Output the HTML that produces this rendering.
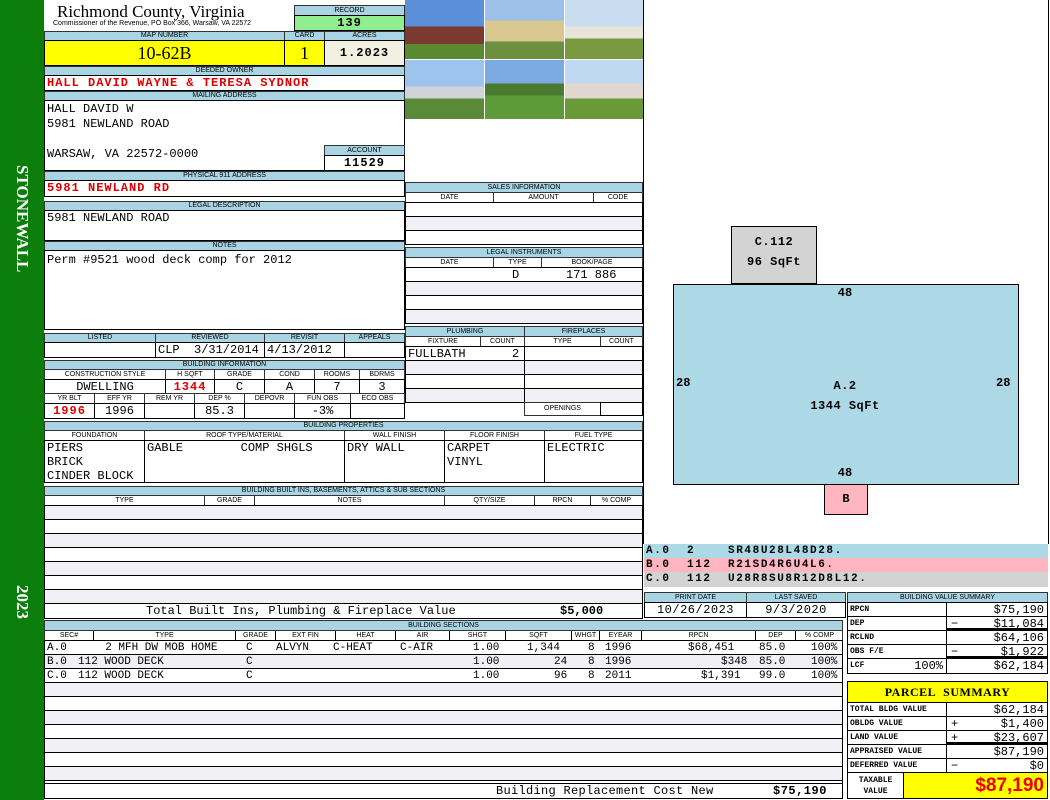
<!DOCTYPE html>
<html><head><meta charset="utf-8"><style>
body{margin:0;width:1050px;height:800px;position:relative;background:#fff;overflow:hidden;font-family:"Liberation Mono",monospace}
.a{position:absolute;box-sizing:border-box;overflow:hidden;white-space:nowrap}
.h{background:#a9d4e4;border:1px solid #333;font:7px/8px "Liberation Sans",sans-serif;text-align:center;color:#000}
.c{border:1px solid #000;background:#fff;font:12px/14px "Liberation Mono",monospace;padding-left:2px}
.r{color:#d00;font-weight:bold;letter-spacing:1px}
.ctr{text-align:center;padding:0}
.rt{text-align:right;padding-right:3px}
.lb{border-left:1px solid #000}
.s{position:absolute;font:11px/14px "Liberation Mono",monospace;white-space:pre}
.sm{font:bold 8px/14px "Liberation Mono",monospace}
</style></head><body>
<div class="a" style="left:0;top:0;width:44px;height:800px;background:#0a7d0a"></div>
<div class="a" style="left:7px;top:165px;width:30px;height:150px;color:#fff;font:bold 17px/30px 'Liberation Serif',serif;writing-mode:vertical-rl">STONEWALL</div>
<div class="a" style="left:7px;top:585px;width:30px;height:40px;color:#fff;font:bold 17px/30px 'Liberation Serif',serif;writing-mode:vertical-rl">2023</div>

<div class="a" style="left:57px;top:2px;width:230px;height:20px;font:17px/20px 'Liberation Serif',serif">Richmond County, Virginia</div>
<div class="a" style="left:53px;top:19px;width:240px;height:10px;font:7px/10px 'Liberation Sans',sans-serif">Commissioner of the Revenue, PO Box 366, Warsaw, VA 22572</div>
<div class="a h" style="left:294px;top:5px;width:111px;height:11px;line-height:9px">RECORD</div>
<div class="a c ctr" style="left:294px;top:15px;width:111px;height:16px;background:#90ee90;font-weight:bold;letter-spacing:1px">139</div>

<div class="a h" style="left:44px;top:31px;width:241px;height:10px">MAP NUMBER</div>
<div class="a h" style="left:284px;top:31px;width:41px;height:10px">CARD</div>
<div class="a h" style="left:324px;top:31px;width:81px;height:10px">ACRES</div>
<div class="a c ctr" style="left:44px;top:40px;width:241px;height:26px;background:#ffff00;font:18px/24px 'Liberation Serif',serif">10-62B</div>
<div class="a c ctr" style="left:284px;top:40px;width:41px;height:26px;background:#ffff00;font:18px/24px 'Liberation Serif',serif">1</div>
<div class="a c ctr" style="left:324px;top:40px;width:81px;height:26px;background:#f2f0e0;font-weight:bold;line-height:24px;letter-spacing:1px">1.2023</div>

<div class="a h" style="left:44px;top:66px;width:361px;height:10px">DEEDED OWNER</div>
<div class="a c r" style="left:44px;top:75px;width:361px;height:16px">HALL DAVID WAYNE &amp; TERESA SYDNOR</div>
<div class="a h" style="left:44px;top:91px;width:361px;height:10px">MAILING ADDRESS</div>
<div class="a c" style="left:44px;top:100px;width:361px;height:71px;line-height:15px;white-space:pre;padding-top:1px">HALL DAVID W
5981 NEWLAND ROAD

WARSAW, VA 22572-0000</div>
<div class="a h" style="left:324px;top:145px;width:81px;height:11px;line-height:9px">ACCOUNT</div>
<div class="a c ctr" style="left:324px;top:155px;width:81px;height:16px;font-weight:bold;letter-spacing:1px">11529</div>
<div class="a h" style="left:44px;top:171px;width:361px;height:10px">PHYSICAL 911 ADDRESS</div>
<div class="a c r" style="left:44px;top:180px;width:361px;height:17px">5981 NEWLAND RD</div>

<div class="a h" style="left:44px;top:201px;width:361px;height:10px">LEGAL DESCRIPTION</div>
<div class="a c" style="left:44px;top:210px;width:361px;height:31px">5981 NEWLAND ROAD</div>
<div class="a h" style="left:44px;top:241px;width:361px;height:10px">NOTES</div>
<div class="a c" style="left:44px;top:250px;width:361px;height:80px;padding-top:2px">Perm #9521 wood deck comp for 2012</div>

<div class="a h" style="left:44px;top:333px;width:112px;height:10px">LISTED</div>
<div class="a h" style="left:155px;top:333px;width:110px;height:10px">REVIEWED</div>
<div class="a h" style="left:264px;top:333px;width:81px;height:10px">REVISIT</div>
<div class="a h" style="left:344px;top:333px;width:61px;height:10px">APPEALS</div>
<div class="a c" style="left:44px;top:342px;width:112px;height:16px"></div>
<div class="a c" style="left:155px;top:342px;width:110px;height:16px;white-space:pre">CLP  3/31/2014</div>
<div class="a c" style="left:264px;top:342px;width:81px;height:16px">4/13/2012</div>
<div class="a c" style="left:344px;top:342px;width:61px;height:16px"></div>

<div class="a h" style="left:44px;top:360px;width:361px;height:10px">BUILDING INFORMATION</div>
<div class="a h" style="left:44px;top:369px;width:122px;height:11px;background:#fff;line-height:9px">CONSTRUCTION STYLE</div>
<div class="a h" style="left:165px;top:369px;width:50px;height:11px;background:#fff;line-height:9px">H SQFT</div>
<div class="a h" style="left:214px;top:369px;width:51px;height:11px;background:#fff;line-height:9px">GRADE</div>
<div class="a h" style="left:264px;top:369px;width:51px;height:11px;background:#fff;line-height:9px">COND</div>
<div class="a h" style="left:314px;top:369px;width:46px;height:11px;background:#fff;line-height:9px">ROOMS</div>
<div class="a h" style="left:359px;top:369px;width:46px;height:11px;background:#fff;line-height:9px">BDRMS</div>
<div class="a c ctr" style="left:44px;top:379px;width:122px;height:15px">DWELLING</div>
<div class="a c ctr r" style="left:165px;top:379px;width:50px;height:15px">1344</div>
<div class="a c ctr" style="left:214px;top:379px;width:51px;height:15px">C</div>
<div class="a c ctr" style="left:264px;top:379px;width:51px;height:15px">A</div>
<div class="a c ctr" style="left:314px;top:379px;width:46px;height:15px">7</div>
<div class="a c ctr" style="left:359px;top:379px;width:46px;height:15px">3</div>
<div class="a h" style="left:44px;top:393px;width:51px;height:11px;background:#fff;line-height:9px">YR BLT</div>
<div class="a h" style="left:94px;top:393px;width:51px;height:11px;background:#fff;line-height:9px">EFF YR</div>
<div class="a h" style="left:144px;top:393px;width:51px;height:11px;background:#fff;line-height:9px">REM YR</div>
<div class="a h" style="left:194px;top:393px;width:51px;height:11px;background:#fff;line-height:9px">DEP %</div>
<div class="a h" style="left:244px;top:393px;width:51px;height:11px;background:#fff;line-height:9px">DEPOVR</div>
<div class="a h" style="left:294px;top:393px;width:57px;height:11px;background:#fff;line-height:9px">FUN OBS</div>
<div class="a h" style="left:350px;top:393px;width:55px;height:11px;background:#fff;line-height:9px">ECO OBS</div>
<div class="a c ctr r" style="left:44px;top:403px;width:51px;height:16px">1996</div>
<div class="a c ctr" style="left:94px;top:403px;width:51px;height:16px">1996</div>
<div class="a c ctr" style="left:144px;top:403px;width:51px;height:16px"></div>
<div class="a c ctr" style="left:194px;top:403px;width:51px;height:16px">85.3</div>
<div class="a c ctr" style="left:244px;top:403px;width:51px;height:16px"></div>
<div class="a c ctr" style="left:294px;top:403px;width:57px;height:16px">-3%</div>
<div class="a c ctr" style="left:350px;top:403px;width:55px;height:16px"></div>

<div class="a h" style="left:44px;top:421px;width:599px;height:10px">BUILDING PROPERTIES</div>
<div class="a h" style="left:44px;top:430px;width:101px;height:11px;background:#fff;line-height:9px">FOUNDATION</div>
<div class="a h" style="left:144px;top:430px;width:201px;height:11px;background:#fff;line-height:9px">ROOF TYPE/MATERIAL</div>
<div class="a h" style="left:344px;top:430px;width:101px;height:11px;background:#fff;line-height:9px">WALL FINISH</div>
<div class="a h" style="left:444px;top:430px;width:101px;height:11px;background:#fff;line-height:9px">FLOOR FINISH</div>
<div class="a h" style="left:544px;top:430px;width:99px;height:11px;background:#fff;line-height:9px">FUEL TYPE</div>
<div class="a c" style="left:44px;top:440px;width:101px;height:43px;line-height:14px;white-space:pre">PIERS
BRICK
CINDER BLOCK</div>
<div class="a c" style="left:144px;top:440px;width:201px;height:43px;line-height:14px;white-space:pre">GABLE        COMP SHGLS</div>
<div class="a c" style="left:344px;top:440px;width:101px;height:43px;line-height:14px">DRY WALL</div>
<div class="a c" style="left:444px;top:440px;width:101px;height:43px;line-height:14px;white-space:pre">CARPET
VINYL</div>
<div class="a c" style="left:544px;top:440px;width:99px;height:43px;line-height:14px">ELECTRIC</div>

<div class="a h" style="left:44px;top:486px;width:599px;height:10px">BUILDING BUILT INS, BASEMENTS, ATTICS &amp; SUB SECTIONS</div>
<div class="a h" style="left:44px;top:495px;width:161px;height:11px;background:#fff;line-height:9px">TYPE</div>
<div class="a h" style="left:204px;top:495px;width:51px;height:11px;background:#fff;line-height:9px">GRADE</div>
<div class="a h" style="left:254px;top:495px;width:191px;height:11px;background:#fff;line-height:9px">NOTES</div>
<div class="a h" style="left:444px;top:495px;width:91px;height:11px;background:#fff;line-height:9px">QTY/SIZE</div>
<div class="a h" style="left:534px;top:495px;width:57px;height:11px;background:#fff;line-height:9px">RPCN</div>
<div class="a h" style="left:590px;top:495px;width:53px;height:11px;background:#fff;line-height:9px">% COMP</div>
<div class="a" style="left:44px;top:505px;width:599px;height:99px;border:1px solid #000;background:repeating-linear-gradient(#f0f0f6 0 13px,#000 13px 14px,#fff 14px 27px,#000 27px 28px)"></div>
<div class="a c" style="left:44px;top:603px;width:599px;height:16px"></div>
<div class="s" style="left:146px;top:604px;font-size:12px">Total Built Ins, Plumbing &amp; Fireplace Value</div>
<div class="s" style="left:560px;top:604px;font:bold 12px/14px 'Liberation Mono',monospace">$5,000</div>

<div class="a h" style="left:44px;top:620px;width:799px;height:11px;line-height:9px">BUILDING SECTIONS</div>
<div class="a" style="left:44px;top:630px;width:799px;height:11px;border:1px solid #333;background:#fff;font:7px/9px 'Liberation Sans',sans-serif">
<span class="a" style="left:0;width:48px;text-align:center">SEC#</span><span class="a lb" style="left:48px;width:142px;text-align:center">TYPE</span><span class="a lb" style="left:190px;width:40px;text-align:center">GRADE</span><span class="a lb" style="left:230px;width:60px;text-align:center">EXT FIN</span><span class="a lb" style="left:290px;width:60px;text-align:center">HEAT</span><span class="a lb" style="left:350px;width:54px;text-align:center">AIR</span><span class="a lb" style="left:404px;width:56px;text-align:center">SHGT</span><span class="a lb" style="left:460px;width:66px;text-align:center">SQFT</span><span class="a lb" style="left:526px;width:28px;text-align:center">WHGT</span><span class="a lb" style="left:554px;width:42px;text-align:center">EYEAR</span><span class="a lb" style="left:596px;width:114px;text-align:center">RPCN</span><span class="a lb" style="left:710px;width:40px;text-align:center">DEP</span><span class="a lb" style="left:750px;width:48px;text-align:center">% COMP</span></div>
<div class="a" style="left:44px;top:640px;width:799px;height:145px;border:1px solid #000;background:repeating-linear-gradient(#fff 0 13px,#000 13px 14px,#f0f0f6 14px 27px,#000 27px 28px)"></div>
<!-- section rows -->
<div class="s" style="left:47px;top:641px">A.0</div><div class="s" style="left:92px;top:641px">  2 MFH DW MOB HOME</div>
<div class="s" style="left:246px;top:641px">C</div><div class="s" style="left:276px;top:641px">ALVYN</div><div class="s" style="left:333px;top:641px">C-HEAT</div><div class="s" style="left:400px;top:641px">C-AIR</div>
<div class="s" style="left:473px;top:641px">1.00</div><div class="s" style="left:527px;top:641px">1,344</div><div class="s" style="left:588px;top:641px">8</div><div class="s" style="left:605px;top:641px">1996</div>
<div class="s" style="left:688px;top:641px">$68,451</div><div class="s" style="left:759px;top:641px">85.0</div><div class="s" style="left:811px;top:641px">100%</div>

<div class="s" style="left:47px;top:655px">B.0</div><div class="s" style="left:78px;top:655px">112 WOOD DECK</div>
<div class="s" style="left:246px;top:655px">C</div>
<div class="s" style="left:473px;top:655px">1.00</div><div class="s" style="left:554px;top:655px">24</div><div class="s" style="left:588px;top:655px">8</div><div class="s" style="left:605px;top:655px">1996</div>
<div class="s" style="left:721px;top:655px">$348</div><div class="s" style="left:759px;top:655px">85.0</div><div class="s" style="left:811px;top:655px">100%</div>

<div class="s" style="left:47px;top:669px">C.0</div><div class="s" style="left:78px;top:669px">112 WOOD DECK</div>
<div class="s" style="left:246px;top:669px">C</div>
<div class="s" style="left:473px;top:669px">1.00</div><div class="s" style="left:554px;top:669px">96</div><div class="s" style="left:588px;top:669px">8</div><div class="s" style="left:605px;top:669px">2011</div>
<div class="s" style="left:701px;top:669px">$1,391</div><div class="s" style="left:759px;top:669px">99.0</div><div class="s" style="left:811px;top:669px">100%</div>

<div class="a c" style="left:44px;top:783px;width:799px;height:16px"></div>
<div class="s" style="left:496px;top:784px;font-size:12px;letter-spacing:0.3px">Building Replacement Cost New</div>
<div class="s" style="left:773px;top:784px;font:bold 12px/14px 'Liberation Mono',monospace;letter-spacing:0.5px">$75,190</div>

<!-- photos -->
<div class="a" style="left:405px;top:0;width:79px;height:59px;background:linear-gradient(#5b8fd8 0 45%,#7a3a30 45% 75%,#5a8a30 75%)"></div>
<div class="a" style="left:485px;top:0;width:79px;height:59px;background:linear-gradient(#9cc0e8 0 35%,#d8c890 35% 70%,#6c9040 70%)"></div>
<div class="a" style="left:565px;top:0;width:79px;height:59px;background:linear-gradient(#c8ddf0 0 45%,#e8e4d8 45% 65%,#7a9a40 65%)"></div>
<div class="a" style="left:405px;top:60px;width:79px;height:59px;background:linear-gradient(#9cc4ec 0 45%,#d0d4d8 45% 65%,#5a8a38 65%)"></div>
<div class="a" style="left:485px;top:60px;width:79px;height:59px;background:linear-gradient(#7aaae0 0 40%,#4a7a30 40% 60%,#5f9a38 60%)"></div>
<div class="a" style="left:565px;top:60px;width:79px;height:59px;background:linear-gradient(#c0d8f0 0 40%,#e0d8d0 40% 65%,#6a9a38 65%)"></div>

<div class="a h" style="left:405px;top:182px;width:238px;height:11px;line-height:9px">SALES INFORMATION</div>
<div class="a h" style="left:405px;top:192px;width:89px;height:11px;background:#fff;line-height:9px">DATE</div>
<div class="a h" style="left:493px;top:192px;width:101px;height:11px;background:#fff;line-height:9px">AMOUNT</div>
<div class="a h" style="left:593px;top:192px;width:50px;height:11px;background:#fff;line-height:9px">CODE</div>
<div class="a" style="left:405px;top:202px;width:238px;height:43px;border:1px solid #000;background:repeating-linear-gradient(#fff 0 13px,#000 13px 14px,#f0f0f6 14px 27px,#000 27px 28px)"></div>
<div class="a h" style="left:405px;top:247px;width:238px;height:11px;line-height:9px">LEGAL INSTRUMENTS</div>
<div class="a h" style="left:405px;top:257px;width:89px;height:11px;background:#fff;line-height:9px">DATE</div>
<div class="a h" style="left:493px;top:257px;width:49px;height:11px;background:#fff;line-height:9px">TYPE</div>
<div class="a h" style="left:541px;top:257px;width:102px;height:11px;background:#fff;line-height:9px">BOOK/PAGE</div>
<div class="a" style="left:405px;top:267px;width:238px;height:57px;border:1px solid #000;background:repeating-linear-gradient(#fff 0 13px,#000 13px 14px,#f0f0f6 14px 27px,#000 27px 28px)"></div>
<div class="s" style="left:512px;top:268px;font-size:12px">D</div>
<div class="s" style="left:566px;top:268px;font-size:12px">171 886</div>

<div class="a h" style="left:405px;top:326px;width:120px;height:11px;line-height:9px">PLUMBING</div>
<div class="a h" style="left:524px;top:326px;width:119px;height:11px;line-height:9px">FIREPLACES</div>
<div class="a h" style="left:405px;top:336px;width:76px;height:11px;background:#fff;line-height:9px">FIXTURE</div>
<div class="a h" style="left:480px;top:336px;width:45px;height:11px;background:#fff;line-height:9px">COUNT</div>
<div class="a h" style="left:524px;top:336px;width:77px;height:11px;background:#fff;line-height:9px">TYPE</div>
<div class="a h" style="left:600px;top:336px;width:43px;height:11px;background:#fff;line-height:9px">COUNT</div>
<div class="a" style="left:405px;top:346px;width:120px;height:57px;border:1px solid #000;background:repeating-linear-gradient(#fff 0 13px,#000 13px 14px,#f0f0f6 14px 27px,#000 27px 28px)"></div>
<div class="a" style="left:524px;top:346px;width:119px;height:57px;border:1px solid #000;background:repeating-linear-gradient(#fff 0 13px,#000 13px 14px,#f0f0f6 14px 27px,#000 27px 28px)"></div>
<div class="s" style="left:408px;top:347px;font-size:12px">FULLBATH</div>
<div class="s" style="left:512px;top:347px;font-size:12px">2</div>
<div class="a h" style="left:524px;top:402px;width:77px;height:14px;background:#fff;line-height:12px">OPENINGS</div>
<div class="a c" style="left:600px;top:402px;width:43px;height:14px"></div>

<!-- sketch -->
<div class="a" style="left:643px;top:0;width:406px;height:544px;border-left:1px solid #000;border-right:1px solid #000"></div>
<div class="a" style="left:731px;top:226px;width:86px;height:58px;background:#d3d3d3;border:1px solid #000;font:bold 12px/20px 'Liberation Mono',monospace;text-align:center;padding-top:5px;white-space:normal;letter-spacing:0.5px">C.112<br>96 SqFt</div>
<div class="a" style="left:673px;top:284px;width:346px;height:201px;background:#add8e6;border:1px solid #000"></div>
<div class="a" style="left:830px;top:286px;width:30px;height:15px;font:bold 12px/15px 'Liberation Mono',monospace;text-align:center">48</div>
<div class="a" style="left:830px;top:466px;width:30px;height:15px;font:bold 12px/15px 'Liberation Mono',monospace;text-align:center">48</div>
<div class="a" style="left:676px;top:376px;width:20px;height:15px;font:bold 12px/15px 'Liberation Mono',monospace">28</div>
<div class="a" style="left:996px;top:376px;width:20px;height:15px;font:bold 12px/15px 'Liberation Mono',monospace">28</div>
<div class="a" style="left:770px;top:376px;width:150px;height:40px;font:bold 12px/20px 'Liberation Mono',monospace;text-align:center;white-space:normal;letter-spacing:0.5px">A.2<br>1344 SqFt</div>
<div class="a" style="left:824px;top:484px;width:44px;height:31px;background:#ffb6c1;border:1px solid #000;font:bold 12px/29px 'Liberation Mono',monospace;text-align:center">B</div>

<div class="a" style="left:644px;top:544px;width:404px;height:14px;background:#add8e6;font:bold 11px/14px 'Liberation Mono',monospace;padding-left:2px;white-space:pre;letter-spacing:1.6px">A.0  2    SR48U28L48D28.</div>
<div class="a" style="left:644px;top:558px;width:404px;height:14px;background:#ffb6c1;font:bold 11px/14px 'Liberation Mono',monospace;padding-left:2px;white-space:pre;letter-spacing:1.6px">B.0  112  R21SD4R6U4L6.</div>
<div class="a" style="left:644px;top:572px;width:404px;height:15px;background:#d3d3d3;font:bold 11px/14px 'Liberation Mono',monospace;padding-left:2px;white-space:pre;letter-spacing:1.6px">C.0  112  U28R8SU8R12D8L12.</div>

<div class="a h" style="left:644px;top:592px;width:103px;height:11px;line-height:9px">PRINT DATE</div>
<div class="a h" style="left:746px;top:592px;width:100px;height:11px;line-height:9px">LAST SAVED</div>
<div class="a c ctr" style="left:644px;top:602px;width:103px;height:16px;letter-spacing:0.5px">10/26/2023</div>
<div class="a c ctr" style="left:746px;top:602px;width:100px;height:16px;letter-spacing:0.5px">9/3/2020</div>

<div class="a h" style="left:847px;top:592px;width:201px;height:11px;line-height:9px">BUILDING VALUE SUMMARY</div>
<div class="a c sm" style="left:847px;top:602px;width:100px;height:15px">RPCN</div>
<div class="a c rt" style="left:946px;top:602px;width:102px;height:15px">$75,190</div>
<div class="a c sm" style="left:847px;top:616px;width:100px;height:15px">DEP</div>
<div class="a c rt" style="left:946px;top:616px;width:102px;height:15px;border-bottom-width:3px"><span style="float:left;padding-left:2px">&minus;</span>$11,084</div>
<div class="a c sm" style="left:847px;top:630px;width:100px;height:15px">RCLND</div>
<div class="a c rt" style="left:946px;top:630px;width:102px;height:15px">$64,106</div>
<div class="a c sm" style="left:847px;top:644px;width:100px;height:15px">OBS F/E</div>
<div class="a c rt" style="left:946px;top:644px;width:102px;height:15px;border-bottom-width:3px"><span style="float:left;padding-left:2px">&minus;</span>$1,922</div>
<div class="a c sm" style="left:847px;top:658px;width:100px;height:16px">LCF<span style="float:right;font:12px/14px 'Liberation Mono',monospace;padding-right:3px">100%</span></div>
<div class="a c rt" style="left:946px;top:658px;width:102px;height:16px">$62,184</div>

<div class="a c ctr" style="left:847px;top:681px;width:201px;height:22px;background:#ffff00;font:bold 12px/20px 'Liberation Serif',serif;letter-spacing:0.5px">PARCEL&nbsp;&nbsp;SUMMARY</div>
<div class="a c sm" style="left:847px;top:702px;width:100px;height:15px">TOTAL BLDG VALUE</div>
<div class="a c rt" style="left:946px;top:702px;width:102px;height:15px">$62,184</div>
<div class="a c sm" style="left:847px;top:716px;width:100px;height:15px">OBLDG VALUE</div>
<div class="a c rt" style="left:946px;top:716px;width:102px;height:15px"><span style="float:left;padding-left:2px">+</span>$1,400</div>
<div class="a c sm" style="left:847px;top:730px;width:100px;height:15px">LAND VALUE</div>
<div class="a c rt" style="left:946px;top:730px;width:102px;height:15px;border-bottom-width:3px"><span style="float:left;padding-left:2px">+</span>$23,607</div>
<div class="a c sm" style="left:847px;top:744px;width:100px;height:15px">APPRAISED VALUE</div>
<div class="a c rt" style="left:946px;top:744px;width:102px;height:15px">$87,190</div>
<div class="a c sm" style="left:847px;top:758px;width:100px;height:15px">DEFERRED VALUE</div>
<div class="a c rt" style="left:946px;top:758px;width:102px;height:15px"><span style="float:left;padding-left:2px">&minus;</span>$0</div>
<div class="a c ctr" style="left:847px;top:772px;width:57px;height:27px;font:bold 8px/11px 'Liberation Mono',monospace;padding-top:2px;white-space:normal">TAXABLE<br>VALUE</div>
<div class="a c rt" style="left:903px;top:772px;width:145px;height:27px;background:#ffff00;color:#e00;font:bold 19px/25px 'Liberation Sans',sans-serif">$87,190</div>
</body></html>
